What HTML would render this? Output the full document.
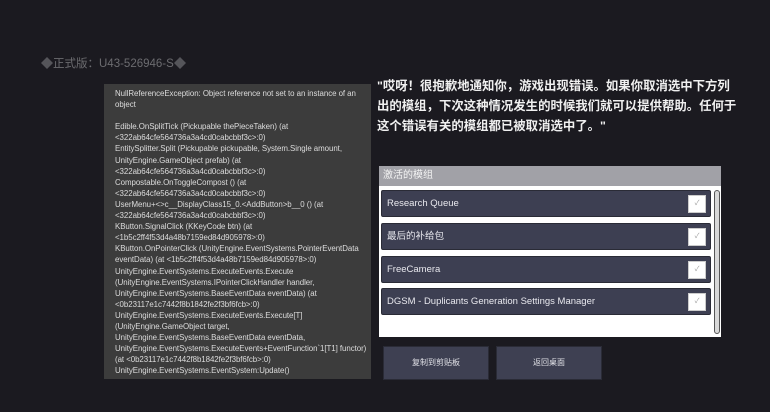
<!DOCTYPE html>
<html><head><meta charset="utf-8"><style>
*{margin:0;padding:0;box-sizing:border-box}
body{width:770px;height:412px;background:#1b1a20;position:relative;overflow:hidden;font-family:"Liberation Sans","Noto Sans CJK SC",sans-serif}
.ver{position:absolute;left:41px;top:55px;color:#6c6c70;font-size:11.5px}
.ic{display:inline-block;width:10px;height:10px;background:#55555a;transform:rotate(45deg) scale(.85);vertical-align:-1px;margin:0 1px}
.err{position:absolute;left:104px;top:84px;width:267px;height:295px;background:#3c3c3c;color:#dcdcdc;font-size:7.9px;line-height:11.1px;padding:4px 0 0 11px;white-space:pre;letter-spacing:-0.05px}
.msg{position:absolute;left:377px;top:76px;color:#f0f0f0;font-size:12.4px;line-height:20px;font-weight:bold;width:390px}
.mods{position:absolute;left:379px;top:166px;width:342px;height:171px;background:#fff}
.hd{height:20px;background:#a1a1a7;color:#f4f4f4;font-size:10px;line-height:20px;padding-left:4px}
.row{position:absolute;left:2px;width:330px;height:27px;background:#3d3f52;border:1px solid #2a2b36;border-radius:2px;color:#e8e8ee;font-size:9.5px;line-height:25px;padding-left:5px}
.cb{position:absolute;right:4px;top:4px;width:18px;height:18px;background:#fff;border:1px solid #ccc;color:#999;font-size:7px;line-height:16px;text-align:center}
.sb{position:absolute;left:335px;top:24px;width:6px;height:144px;border:1px solid #555;border-radius:3px;background:#d8d8d8}
.btn{position:absolute;top:346px;width:106px;height:34px;background:#3e4052;border:1px solid #2a2b36;color:#e0e0e6;font-size:8px;line-height:32px;text-align:center}
</style></head><body>
<div class="ver"><span class="ic"></span>正式版：U43-526946-S<span class="ic"></span></div>
<div class="err">NullReferenceException: Object reference not set to an instance of an
object

Edible.OnSplitTick (Pickupable thePieceTaken) (at
&lt;322ab64cfe564736a3a4cd0cabcbbf3c&gt;:0)
EntitySplitter.Split (Pickupable pickupable, System.Single amount,
UnityEngine.GameObject prefab) (at
&lt;322ab64cfe564736a3a4cd0cabcbbf3c&gt;:0)
Compostable.OnToggleCompost () (at
&lt;322ab64cfe564736a3a4cd0cabcbbf3c&gt;:0)
UserMenu+&lt;&gt;c__DisplayClass15_0.&lt;AddButton&gt;b__0 () (at
&lt;322ab64cfe564736a3a4cd0cabcbbf3c&gt;:0)
KButton.SignalClick (KKeyCode btn) (at
&lt;1b5c2ff4f53d4a48b7159ed84d905978&gt;:0)
KButton.OnPointerClick (UnityEngine.EventSystems.PointerEventData
eventData) (at &lt;1b5c2ff4f53d4a48b7159ed84d905978&gt;:0)
UnityEngine.EventSystems.ExecuteEvents.Execute
(UnityEngine.EventSystems.IPointerClickHandler handler,
UnityEngine.EventSystems.BaseEventData eventData) (at
&lt;0b23117e1c7442f8b1842fe2f3bf6fcb&gt;:0)
UnityEngine.EventSystems.ExecuteEvents.Execute[T]
(UnityEngine.GameObject target,
UnityEngine.EventSystems.BaseEventData eventData,
UnityEngine.EventSystems.ExecuteEvents+EventFunction`1[T1] functor)
(at &lt;0b23117e1c7442f8b1842fe2f3bf6fcb&gt;:0)
UnityEngine.EventSystems.EventSystem:Update()</div>
<div class="msg">"哎呀！很抱歉地通知你，游戏出现错误。如果你取消选中下方列<br>出的模组，下次这种情况发生的时候我们就可以提供帮助。任何于<br>这个错误有关的模组都已被取消选中了。"</div>
<div class="mods">
<div class="hd">激活的模组</div>
<div class="row" style="top:24px">Research Queue<div class="cb">✓</div></div>
<div class="row" style="top:57px">最后的补给包<div class="cb">✓</div></div>
<div class="row" style="top:90px">FreeCamera<div class="cb">✓</div></div>
<div class="row" style="top:122px">DGSM - Duplicants Generation Settings Manager<div class="cb">✓</div></div>
<div class="sb"></div>
</div>
<div class="btn" style="left:383px">复制到剪贴板</div>
<div class="btn" style="left:496px">返回桌面</div>
</body></html>
